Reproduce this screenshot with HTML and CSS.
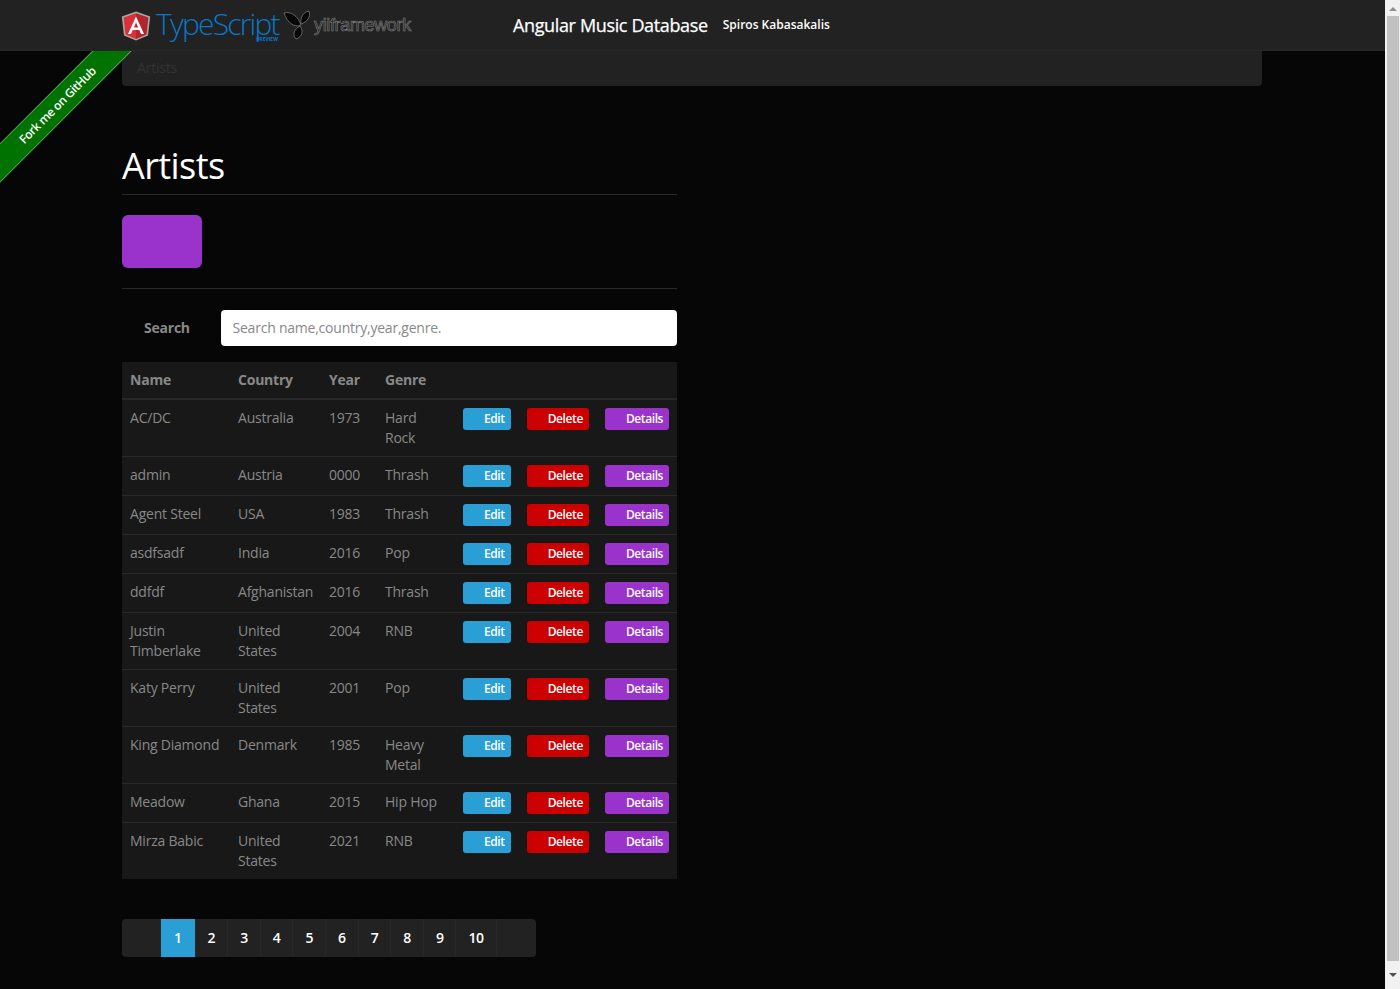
FILE: index.html
```html
<!DOCTYPE html>
<html lang="en">
<head>
  <meta charset="UTF-8">
  <meta name="viewport" content="width=device-width, initial-scale=1.0">
  <title>Angular Music Database</title>
  <link rel="stylesheet" href="styles.css">
</head>
<body>

  <div class="page">

    <header class="navbar">
      <div class="logo-ng">
        <svg width="30" height="30" viewBox="0 0 30 30">
          <path d="M15 0.5 L0.8 5.6 L3 24.4 L15 29.6 L27 24.4 L29.2 5.6 Z" fill="#a6a6a6"/>
          <path d="M15 2.2 L2.6 6.6 L4.5 23.4 L15 28 Z" fill="#dd2f38"/>
          <path d="M15 2.2 L27.4 6.6 L25.5 23.4 L15 28 Z" fill="#b3242c"/>
          <path d="M15 5.5 L7 23 H10 L11.7 19 H18.3 L20 23 H23 Z M15 11.5 L17.2 16.6 H12.8 Z" fill="#fff" fill-rule="evenodd"/>
        </svg>
      </div>
      <div class="logo-ts">TypeScript<span class="logo-ts-tag">PREVIEW</span></div>
      <div class="logo-yii">
        <svg class="logo-yii-mark" width="29" height="30" viewBox="0 0 29 30">
          <path d="M1 3 C8 1 15 6 18 15 C12 18 4 13 1 3 Z" fill="#060606" stroke="#777" stroke-width="0.8"/>
          <path d="M18 14 C17 8 20 2 26 1 C28 7 24 12 18 14 Z" fill="#060606" stroke="#777" stroke-width="0.8"/>
          <path d="M17 16 C11 19 9 25 13 29 C19 27 21 21 17 16 Z" fill="#060606" stroke="#777" stroke-width="0.8"/>
        </svg>
        <span class="logo-yii-text">yiiframework</span>
      </div>
      <div class="nav-title">Angular Music Database</div>
      <div class="nav-author">Spiros Kabasakalis</div>
    </header>

    <div class="ribbon-wrap">
      <div class="ribbon">Fork me on GitHub</div>
    </div>

    <main class="container">
      <div class="breadcrumb">Artists</div>

      <section class="artists">
        <h1 class="page-title">Artists</h1>
        <div class="btn-create"></div>
        <hr class="divider">

        <div class="search-row">
          <label class="search-label" for="search">Search</label>
          <input class="search-input" id="search" type="text" placeholder="Search name,country,year,genre.">
        </div>

        <table class="artist-table">
          <thead>
            <tr>
              <th class="col-name">Name</th>
              <th class="col-country">Country</th>
              <th class="col-year">Year</th>
              <th class="col-genre">Genre</th>
              <th></th>
            </tr>
          </thead>
          <tbody>
            <tr>
              <td>AC/DC</td><td>Australia</td><td>1973</td><td>Hard Rock</td>
              <td><div class="actions"><a class="btn btn-edit"><i></i>Edit</a><a class="btn btn-delete"><i></i>Delete</a><a class="btn btn-details"><i></i>Details</a></div></td>
            </tr>
            <tr>
              <td>admin</td><td>Austria</td><td>0000</td><td>Thrash</td>
              <td><div class="actions"><a class="btn btn-edit"><i></i>Edit</a><a class="btn btn-delete"><i></i>Delete</a><a class="btn btn-details"><i></i>Details</a></div></td>
            </tr>
            <tr>
              <td>Agent Steel</td><td>USA</td><td>1983</td><td>Thrash</td>
              <td><div class="actions"><a class="btn btn-edit"><i></i>Edit</a><a class="btn btn-delete"><i></i>Delete</a><a class="btn btn-details"><i></i>Details</a></div></td>
            </tr>
            <tr>
              <td>asdfsadf</td><td>India</td><td>2016</td><td>Pop</td>
              <td><div class="actions"><a class="btn btn-edit"><i></i>Edit</a><a class="btn btn-delete"><i></i>Delete</a><a class="btn btn-details"><i></i>Details</a></div></td>
            </tr>
            <tr>
              <td>ddfdf</td><td>Afghanistan</td><td>2016</td><td>Thrash</td>
              <td><div class="actions"><a class="btn btn-edit"><i></i>Edit</a><a class="btn btn-delete"><i></i>Delete</a><a class="btn btn-details"><i></i>Details</a></div></td>
            </tr>
            <tr>
              <td>Justin Timberlake</td><td>United States</td><td>2004</td><td>RNB</td>
              <td><div class="actions"><a class="btn btn-edit"><i></i>Edit</a><a class="btn btn-delete"><i></i>Delete</a><a class="btn btn-details"><i></i>Details</a></div></td>
            </tr>
            <tr>
              <td>Katy Perry</td><td>United States</td><td>2001</td><td>Pop</td>
              <td><div class="actions"><a class="btn btn-edit"><i></i>Edit</a><a class="btn btn-delete"><i></i>Delete</a><a class="btn btn-details"><i></i>Details</a></div></td>
            </tr>
            <tr>
              <td>King Diamond</td><td>Denmark</td><td>1985</td><td>Heavy Metal</td>
              <td><div class="actions"><a class="btn btn-edit"><i></i>Edit</a><a class="btn btn-delete"><i></i>Delete</a><a class="btn btn-details"><i></i>Details</a></div></td>
            </tr>
            <tr>
              <td>Meadow</td><td>Ghana</td><td>2015</td><td>Hip Hop</td>
              <td><div class="actions"><a class="btn btn-edit"><i></i>Edit</a><a class="btn btn-delete"><i></i>Delete</a><a class="btn btn-details"><i></i>Details</a></div></td>
            </tr>
            <tr>
              <td>Mirza Babic</td><td>United States</td><td>2021</td><td>RNB</td>
              <td><div class="actions"><a class="btn btn-edit"><i></i>Edit</a><a class="btn btn-delete"><i></i>Delete</a><a class="btn btn-details"><i></i>Details</a></div></td>
            </tr>
          </tbody>
        </table>

        <ul class="pagination">
          <li class="page-edge"></li>
          <li class="page-num active">1</li>
          <li class="page-num">2</li>
          <li class="page-num">3</li>
          <li class="page-num">4</li>
          <li class="page-num">5</li>
          <li class="page-num">6</li>
          <li class="page-num">7</li>
          <li class="page-num">8</li>
          <li class="page-num">9</li>
          <li class="page-num">10</li>
          <li class="page-edge"></li>
        </ul>
      </section>
    </main>
  </div>

  <div class="scrollbar">
    <div class="scroll-btn"><span class="arrow-up"></span></div>
    <div class="scroll-track"><div class="scroll-thumb"></div></div>
    <div class="scroll-btn scroll-btn-end"><span class="arrow-down"></span></div>
  </div>

</body>
</html>
```

FILE: styles.css
```css
/* Dark theme for the artists page */
html, body {
  height: 100%;
  margin: 0;
}
body {
  display: flex;
  overflow: hidden;
  font-family: "Open Sans", "Noto Sans", sans-serif;
  font-size: 14px;
  line-height: 20px;
  background-color: #060606;
  color: #888;
}
/* Open Sans runs a little wider than the page's real font */
.breadcrumb, .page-title, .search-label, .search-input, .artist-table th, .artist-table td {
  letter-spacing: -0.016em;
}
.page {
  position: relative;
  flex: 1;
  min-width: 0;
  overflow: hidden;
}

/* Top bar */
.navbar {
  display: flex;
  align-items: center;
  height: 50px;
  padding-left: 121px;
  background-color: #222;
  border-bottom: 1px solid #282828;
}
.logo-ng {
  display: flex;
  width: 30px;
  height: 30px;
  margin-top: 1px;
}
.logo-ts {
  position: relative;
  flex: none;
  width: 127px;
  margin: -3px 0 0 5px;
  font-weight: 300;
  font-size: 30px;
  line-height: 40px;
  letter-spacing: -1.8px;
  color: #0678c8;
}
.logo-ts-tag {
  position: absolute;
  right: 5px;
  bottom: 2px;
  font-size: 5px;
  line-height: 6px;
  font-weight: 700;
  letter-spacing: 0;
}
.logo-yii {
  display: flex;
  align-items: center;
  flex: none;
  width: 130px;
}
.logo-yii-mark {
  flex: none;
}
.logo-yii-text {
  margin-left: 2px;
  font-family: "Liberation Sans", sans-serif;
  font-size: 18px;
  letter-spacing: -0.35px;
  color: #222;
  -webkit-text-stroke: 0.6px #808080;
}
.nav-title {
  margin-left: 100px;
  font-size: 18px;
  letter-spacing: -0.36px;
  color: #fff;
  -webkit-text-stroke: 0.25px #fff;
}
.nav-author {
  margin-left: 15px;
  font-size: 12px;
  font-weight: 600;
  color: #fff;
}

/* Corner ribbon */
.ribbon-wrap {
  position: absolute;
  top: 51px;
  left: 0;
  width: 140px;
  height: 140px;
  overflow: hidden;
}
.ribbon {
  position: absolute;
  top: 39px;
  left: -46px;
  width: 210px;
  height: 28px;
  box-sizing: border-box;
  padding-right: 4px;
  border-top: 1px solid rgba(255, 255, 255, 0.35);
  border-bottom: 1px solid rgba(255, 255, 255, 0.35);
  background-color: #007200;
  color: #fff;
  font-size: 12px;
  font-weight: 600;
  letter-spacing: -0.4px;
  line-height: 26px;
  text-align: center;
  transform: rotate(-45deg);
}

/* Main column */
.container {
  margin-left: 122px;
  width: 1140px;
}
.breadcrumb {
  height: 35px;
  box-sizing: border-box;
  padding: 7px 15px;
  background-color: #222;
  border-radius: 0 0 4px 4px;
  color: #333;
}
.artists {
  width: 555px;
}
.page-title {
  margin: 60px 0 20px;
  padding-bottom: 9px;
  border-bottom: 1px solid #282828;
  font-size: 36px;
  line-height: 39px;
  font-weight: 400;
  color: #fff;
}
.btn-create {
  width: 80px;
  height: 53px;
  border-radius: 6px;
  background-color: #9933cc;
}
.divider {
  height: 1px;
  margin: 20px 0 21px;
  border: 0;
  background-color: #282828;
}

/* Search */
.search-row {
  display: flex;
  align-items: center;
  margin-bottom: 16px;
}
.search-label {
  width: 99px;
  box-sizing: border-box;
  padding-left: 22px;
  font-weight: 700;
}
.search-input {
  flex: 1;
  min-width: 0;
  height: 36px;
  box-sizing: border-box;
  padding: 7px 12px 9px 11.5px;
  border: 0;
  border-radius: 4px;
  background-color: #fff;
  font-family: inherit;
  font-size: 14px;
  color: #888;
}
.search-input::placeholder {
  color: #888;
  opacity: 1;
}

/* Table */
.artist-table {
  width: 100%;
  table-layout: fixed;
  border-collapse: collapse;
  background-color: #181818;
}
.artist-table th,
.artist-table td {
  box-sizing: border-box;
  padding: 8px;
}
.artist-table th {
  border-bottom: 2px solid #282828;
  text-align: left;
  font-weight: 700;
}
.artist-table td {
  border-top: 1px solid #282828;
  vertical-align: top;
}
.artist-table tbody tr:first-child td {
  border-top: 0;
}
.col-name { width: 108px; }
.col-country { width: 91px; }
.col-year { width: 56px; }
.col-genre { width: 78px; }

.actions {
  display: flex;
  gap: 16px;
}
.btn {
  display: block;
  flex: none;
  height: 22px;
  box-sizing: border-box;
  padding: 0 6px;
  border-radius: 3px;
  color: #fff;
  font-size: 12px;
  font-weight: 600;
  letter-spacing: -0.4px;
  line-height: 22px;
  white-space: nowrap;
}
.btn i {
  display: inline-block;
  width: 15px;
}
.btn-edit { background-color: #2a9fd6; }
.btn-delete { background-color: #cc0000; }
.btn-details { background-color: #9933cc; }

/* Pagination */
.pagination {
  display: flex;
  width: max-content;
  margin: 40px 0 0;
  padding: 0;
  list-style: none;
  border-radius: 4px;
  overflow: hidden;
  background-color: #222;
}
.pagination li {
  height: 38px;
  box-sizing: border-box;
  border-right: 1px solid #282828;
  line-height: 38px;
}
.pagination li:last-child {
  border-right: 0;
}
.page-edge {
  width: 39px;
}
.page-num {
  padding: 0 12px;
  font-weight: 600;
  letter-spacing: -0.4px;
  color: #fff;
}
.page-num.active {
  background-color: #2a9fd6;
  padding: 0 13px;
}

/* Browser scrollbar */
.scrollbar {
  display: flex;
  flex-direction: column;
  flex: none;
  width: 15px;
  background-color: #f1f1f1;
}
.scroll-btn {
  display: flex;
  flex: none;
  align-items: center;
  justify-content: center;
  height: 16px;
}
.scroll-btn-end {
  height: 28px;
}
.arrow-up {
  border: 4px solid transparent;
  border-top: 0;
  border-bottom: 4px solid #909090;
  margin-top: 2px;
}
.arrow-down {
  border: 4px solid transparent;
  border-bottom: 0;
  border-top: 4px solid #505050;
}
.scroll-track {
  flex: 1;
  padding: 0 1px 0 2px;
}
.scroll-thumb {
  height: 100%;
  background-color: #c1c1c1;
}
```
